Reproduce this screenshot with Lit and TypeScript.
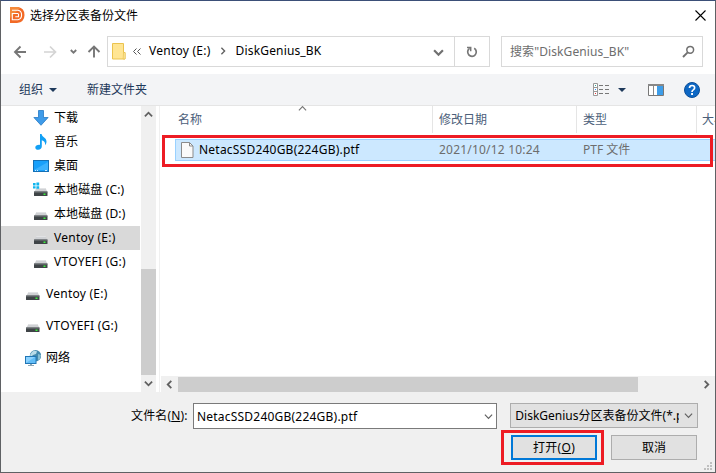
import { LitElement, html, css, svg, nothing } from "lit";
import { customElement, property } from "lit/decorators.js";

const drive = svg`
  <path d="M3.500 6h9l2 4H1.200z" fill="#cfd1d4"/>
  <path d="M3.500 6h9l.6 1H2.900z" fill="#e2e3e5"/>
  <rect x="1" y="9.500" width="13.500" height="4.500" rx=".5" fill="#3f4447"/>
  <rect x="1" y="9.500" width="13.500" height="1" fill="#777b7e"/>
  <rect x="10.500" y="11.500" width="2" height="1.500" fill="#3bf03b"/>`;

const icons: Record<string, unknown> = {
  down: svg`<path d="M5.500.5h5v7h4.600L8 15.300.9 7.500h4.600z" fill="#3e9be9" stroke="#2479c4" stroke-width=".8"/>`,
  music: svg`<path d="M7 0h1.600c.3 3 4.900 3.600 4.900 7.500 0 1.700-.7 2.900-1.500 3.700.5-2.600-.6-4.200-3.200-5v6c0 2-1.500 3.600-3.600 3.600-1.700 0-2.900-.9-2.900-2.300 0-1.800 2.300-3 4.700-2.600z" fill="#12a0f5"/>`,
  desktop: svg`<rect x=".5" y="2.500" width="15" height="11" fill="#18a0fb" stroke="#1570b5"/><path d="M1 12L15 4v8z" fill="#3bb2ff"/><path d="M2 12.500h1M4 12.500h1M12 12.500h2" stroke="#cdeaff" stroke-width="1"/>`,
  drive,
  windrive: svg`${drive}<path d="M0 1h2.600v2.400H0zM3.400.6h2.800v2.800H3.400zM0 4.200h2.600v2.200H0zM3.400 4.200h2.800v2.600H3.400z" fill="#11b5ee"/>`,
  network: svg`<circle cx="10.500" cy="5.800" r="5.700" fill="#4389ad"/><path d="M7 2c2-2 4-1.500 5-.5L11 4 8 5 6 7 5 5z" fill="#b9dbe8"/><path d="M13 4l3 1-1 4-2 1z" fill="#86bdd3"/>
    <rect x=".5" y="6.500" width="10.500" height="7" fill="#62bdf7" stroke="#2176b5"/><path d="M1 13V7h9z" fill="#8bd2ff"/><path d="M5 14h2v1h2v1H3v-1h2z" fill="#8da7b5"/>`,
};

interface Place { label: string; icon: string; top?: boolean; selected?: boolean }
const places: Place[] = [
  { label: "下载", icon: "down" },
  { label: "音乐", icon: "music" },
  { label: "桌面", icon: "desktop" },
  { label: "本地磁盘 (C:)", icon: "windrive" },
  { label: "本地磁盘 (D:)", icon: "drive" },
  { label: "Ventoy (E:)", icon: "drive", selected: true },
  { label: "VTOYEFI (G:)", icon: "drive" },
  { label: "Ventoy (E:)", icon: "drive", top: true },
  { label: "VTOYEFI (G:)", icon: "drive", top: true },
  { label: "网络", icon: "network", top: true },
];

@customElement("ui-chevron")
export class UiChevron extends LitElement {
  @property() dir = "down";
  @property({ type: Number }) size = 8;
  @property({ type: Number }) weight = 2;
  static styles = css`:host { display: flex; color: #606060; } svg { display: block; }`;
  render() {
    const d: Record<string, string> = {
      down: "M1 3l4 4 4-4", up: "M1 7l4-4 4 4", left: "M7 1L3 5l4 4", right: "M3 1l4 4-4 4",
    };
    return html`<svg width=${this.size} height=${this.size} viewBox="0 0 10 10"><path d=${d[this.dir]} fill="none" stroke="currentColor" stroke-width=${this.weight}/></svg>`;
  }
}

@customElement("app-root")
export class AppRoot extends LitElement {
  static styles = css`
    :host {
      display: block; box-sizing: border-box; width: 716px; height: 473px; position: relative; overflow: hidden;
      border: 1px solid #5f6164; border-top-color: #3b4f78; background: #fff; color: #000;
      font: 12px/16px "Noto Sans", "Noto Sans CJK SC", sans-serif; white-space: nowrap;
    }
    * { box-sizing: border-box; }
    svg { display: block; flex: none; }
    .window { display: flex; flex-direction: column; height: 471px; }
    .title { height: 30px; display: flex; align-items: center; padding: 0 9px 2px 8px; }
    .title .name { margin-left: 5px; flex: 1; padding-top: 2px; }
    .nav { height: 43px; display: flex; padding: 5px 12px 0 12px; }
    .arrows { width: 94px; height: 31px; }
    .address { width: 383px; height: 31px; border: 1px solid #d9d9d9; display: flex; align-items: center; }
    .crumbs { flex: 1; display: flex; align-items: center; padding-left: 4px; height: 100%; padding-bottom: 1px; }
    .crumbs span { letter-spacing: .25px; }
    .crumbs .back { margin: 0 8px 0 7px; }
    .crumbs .sep { margin: 0 9px 0 8px; }
    .crumbs .drop { margin: 2px 10px 0 auto; color: #707070; }
    .crumbs .wide { letter-spacing: .16px; }
    .refresh { width: 35px; height: 100%; border-left: 1px solid #d9d9d9; display: grid; place-items: center; }
    .search { width: 202px; height: 31px; margin-left: 11px; border: 1px solid #d9d9d9; color: #6d6d6d; display: flex; align-items: center; justify-content: space-between; padding: 0 7px 0 8px; letter-spacing: .1px; }
    .tools { height: 31px; background: #f3f4f6; color: #1e395b; display: flex; align-items: center; padding: 0 15px 0 18px; }
    .organize { margin-right: 6px; }
    .folder { margin-left: 30px; flex: 1; }
    .views { margin-right: -6px; }
    .middle { height: 287px; display: flex; border-top: 1px solid #e5e5e5; }
    .tree { width: 140px; height: 286px; overflow: hidden; }
    .item { height: 24px; padding-left: 32px; display: flex; align-items: center; gap: 5px; letter-spacing: .25px; }
    .item.cjk { letter-spacing: .12px; }
    .item.top { height: 32px; padding-left: 24px; }
    .item:not(.top) + .item.top { margin-top: 4px; }
    .item.selected { background: #d9d9d9; width: 139px; }
    .vbar { width: 15px; background: #f0f0f0; height: 286px; display: flex; flex-direction: column; align-items: center; justify-content: space-between; padding: 4px 0; }
    .vthumb { width: 15px; height: 106px; background: #cdcdcd; margin-top: 145px; }
    .split { width: 4px; border-right: 1px solid #f0f0f0; height: 286px; }
    .list { flex: 1; display: flex; flex-direction: column; min-width: 0; }
    .head { height: 27px; display: flex; color: #4c607a; position: relative; margin-left: 1px; }
    .head div { border-right: 1px solid #e5e5e5; padding: 6px 0 0 6px; overflow: hidden; }
    .head .c1 { width: 272px; padding-left: 17px; }
    .head .c2 { width: 144px; } .head .c3 { width: 120px; }
    .head .c4 { border: 0; flex: 1; padding-left: 5px; }
    .sort { position: absolute; left: 137px; top: -2px; color: #777; }
    .file { margin: 6px 0 0 15px; height: 22px; display: flex; align-items: center; background: #cce8ff; border: 1px solid #99d1ff; border-right: 0; color: #6d6d6d; }
    .page { margin-left: 5px; }
    .fname { letter-spacing: .22px; }
    .file .fname { width: 240px; margin-left: 5px; color: #000; }
    .file .date { width: 144px; letter-spacing: .2px; }
    .hbar { margin-top: auto; height: 16px; display: flex; align-items: center; background: #f0f0f0; margin-left: 1px; justify-content: space-between; padding: 0 4px 0 4px; }
    .hthumb { width: 460px; height: 15px; background: #cdcdcd; margin-right: auto; margin-left: 4px; }
    .foot { flex: 1; background: #f0f0f0; padding: 11px 18px 0 130px; display: flex; flex-direction: column; gap: 6px; }
    .line { display: flex; align-items: flex-start; }
    .label { width: 62px; padding-top: 5px; letter-spacing: .15px; }
    .input { width: 305px; height: 26px; border: 1px solid #7a7a7a; background: #fff; display: flex; align-items: center; justify-content: space-between; padding: 1px 3px 0 3px; }
    .select { width: 188px; height: 25px; margin-left: 12px; border: 1px solid #adadad; background: #e1e1e1; display: flex; align-items: center; justify-content: space-between; padding: 0 4px; }
    .select { position: relative; left: 1px; }
    .select span { width: 164px; overflow: hidden; }
    .buttons { justify-content: flex-end; gap: 14px; }
    .btn { width: 86px; height: 25px; background: #e1e1e1; border: 1px solid #adadad; display: grid; place-items: center; }
    .btn.primary { border: 2px solid #0078d7; letter-spacing: .3px; }
    .mark { position: absolute; border: 3px solid #ed1c24; }
    .mark.row { left: 161px; top: 134px; width: 551px; height: 32px; }
    .mark.open { left: 500px; top: 429px; width: 103px; height: 35px; }
    .grip { position: absolute; right: 3px; bottom: 2px; }
    u { text-underline-offset: 1px; }
  `;

  render() {
    return html`
      <div class="window">
        <div class="title">
          <svg width="16" height="16" viewBox="0 0 16 16"><path d="M1 0h8q6.500 1 6.500 8T8 16H1z" fill="#f26a26"/><path d="M1 0h8l2 1-10 10z" fill="#f58a3a"/><path d="M3 3.300h6q3.600.7 3.600 4.700T9 12.700H3.300V6.500H9M9.500 6.500v3.300H6.300" fill="none" stroke="#fff" stroke-width="1.100"/></svg>
          <span class="name">选择分区表备份文件</span>
          <svg width="11" height="11" viewBox="0 0 11 11"><path d="M.5.5l10 10M10.500.5l-10 10" stroke="#000" stroke-width="1.100"/></svg>
        </div>
        <div class="nav">
          <svg class="arrows" viewBox="0 0 94 31" fill="none">
            <path d="M13 16H2.500M7.500 10.500L2 16l5.500 5.500" stroke="#767676" stroke-width="1.900"/>
            <path d="M31 16h11M37 10.500l5.500 5.500-5.500 5.500" stroke="#d4d4d4" stroke-width="1.700"/>
            <path d="M57.800 14l2.700 2.700 2.700-2.700" stroke="#777" stroke-width="1.800"/>
            <path d="M81 21.500V11M75.500 16l5.500-5.500 5.500 5.500" stroke="#767676" stroke-width="1.900"/>
          </svg>
          <div class="address">
            <div class="crumbs">
              <svg width="14" height="17" viewBox="0 0 14 17"><path d="M.5.5h11v9h1.500v6.500H.5z" fill="#ffe593" stroke="#ebc34e"/><path d="M11.500 9.500h1.500V16h-1.800z" fill="#fff1b8" stroke="#ebc34e" stroke-width=".8"/></svg>
              <svg class="back" width="8" height="7" viewBox="0 0 8 7"><path d="M3.500.5l-3 3 3 3M7.500.5l-3 3 3 3" fill="none" stroke="#555"/></svg>
              <span>Ventoy (E:)</span>
              <ui-chevron class="sep" dir="right" size="8" weight="1.7"></ui-chevron>
              <span class="wide">DiskGenius_BK</span>
              <ui-chevron class="drop" size="11" weight="2"></ui-chevron>
            </div>
            <div class="refresh"><svg width="12" height="12" viewBox="0 0 12 12"><path d="M3.600 2.400A4.300 4.300 0 1 0 8.200 2.300" fill="none" stroke="#777" stroke-width="1.700"/><path d="M1 1.500h3.700v3.700" fill="none" stroke="#777" stroke-width="1.500"/></svg></div>
          </div>
          <div class="search"><span>搜索"DiskGenius_BK"</span>
            <svg width="13" height="13" viewBox="0 0 13 13" fill="none" stroke="#707070"><circle cx="8.200" cy="4.800" r="3.400" stroke-width="1.500"/><path d="M5.700 7.300L1 12" stroke-width="1.900"/></svg>
          </div>
        </div>
        <div class="tools">
          <span class="organize">组织</span>
          <svg width="8" height="4" viewBox="0 0 8 4"><path d="M0 0h8L4 4z" fill="#1e395b"/></svg>
          <span class="folder">新建文件夹</span>
          <svg class="views" width="97" height="16" viewBox="0 0 97 16">
            <path d="M.5 1.500h4v12h-4zM.5 5.500h4M.5 9.500h4" fill="#fff" stroke="#999"/>
            <path d="M6 3.500h4m2 0h4M6 7.500h4m2 0h4M6 11.500h4m2 0h4" stroke="#777"/>
            <path d="M2 3h1v1H2z" fill="#3a9" /><path d="M2 7h1v1H2z" fill="#28f"/><path d="M2 11h1v1H2z" fill="#e33"/>
            <path d="M25 6h8l-4 4z" fill="#1e395b"/>
            <path d="M55.500 2.500h15v11h-15z" fill="#fff" stroke="#777"/><path d="M55 2h16v2H55zM60 4h1v9h-1z" fill="#888"/><path d="M64 4h6v9h-6z" fill="#3d9de9"/>
          </svg>
          <svg width="16" height="16" viewBox="0 0 16 16"><circle cx="8" cy="8" r="7.500" fill="#0d67c4" stroke="#0b4e99"/><path d="M5.500 6q0-2.500 2.600-2.500T10.600 6Q10.600 7 9.300 7.900 8 8.700 8 10" fill="none" stroke="#fff" stroke-width="1.700"/><path d="M7.100 11h1.900v1.900H7.100z" fill="#fff"/></svg>
        </div>
        <div class="middle">
          <div class="tree">
            ${places.map((p) => html`<div class="item ${p.top ? "top" : ""} ${p.selected ? "selected" : ""} ${p.label.charCodeAt(0) > 255 ? "cjk" : ""}">
              <svg width="16" height="16" viewBox="0 0 16 16">${icons[p.icon] ?? nothing}</svg><span>${p.label}</span></div>`)}
          </div>
          <div class="vbar"><ui-chevron dir="up" size="9"></ui-chevron><div class="vthumb"></div><ui-chevron size="9"></ui-chevron></div>
          <div class="split"></div>
          <div class="list">
            <div class="head">
              <div class="c1">名称</div><div class="c2">修改日期</div><div class="c3">类型</div><div class="c4">大小</div>
              <ui-chevron class="sort" dir="up" size="9" weight="1.3"></ui-chevron>
            </div>
            <div class="file">
              <svg class="page" width="13" height="16" viewBox="0 0 13 16"><path d="M.5.5h8l3.500 3.500v11.500H.5z" fill="#fafafa" stroke="#8b8b8b"/><path d="M8.500.5v3.500H12" fill="none" stroke="#8b8b8b"/></svg>
              <span class="fname">NetacSSD240GB(224GB).ptf</span><span class="date">2021/10/12 10:24</span><span>PTF 文件</span>
            </div>
            <div class="hbar"><ui-chevron dir="left" size="9"></ui-chevron><div class="hthumb"></div><ui-chevron dir="right" size="9"></ui-chevron></div>
          </div>
        </div>
        <div class="foot">
          <div class="line">
            <span class="label">文件名(<u>N</u>):</span>
            <div class="input"><span class="fname">NetacSSD240GB(224GB).ptf</span><ui-chevron size="9" weight="1.3"></ui-chevron></div>
            <div class="select"><span>DiskGenius分区表备份文件(*.ptf)</span><ui-chevron size="9" weight="1.3"></ui-chevron></div>
          </div>
          <div class="line buttons"><div class="btn primary"><span>打开(<u>O</u>)</span></div><div class="btn">取消</div></div>
        </div>
      </div>
      <div class="mark row"></div>
      <div class="mark open"></div>
      <svg class="grip" width="8" height="8" viewBox="0 0 8 8"><path d="M6 0h2v2H6zM6 3h2v2H6zM3 3h2v2H3zM0 6h2v2H0zM3 6h2v2H3zM6 6h2v2H6z" fill="#bfbfbf"/></svg>
    `;
  }
}
